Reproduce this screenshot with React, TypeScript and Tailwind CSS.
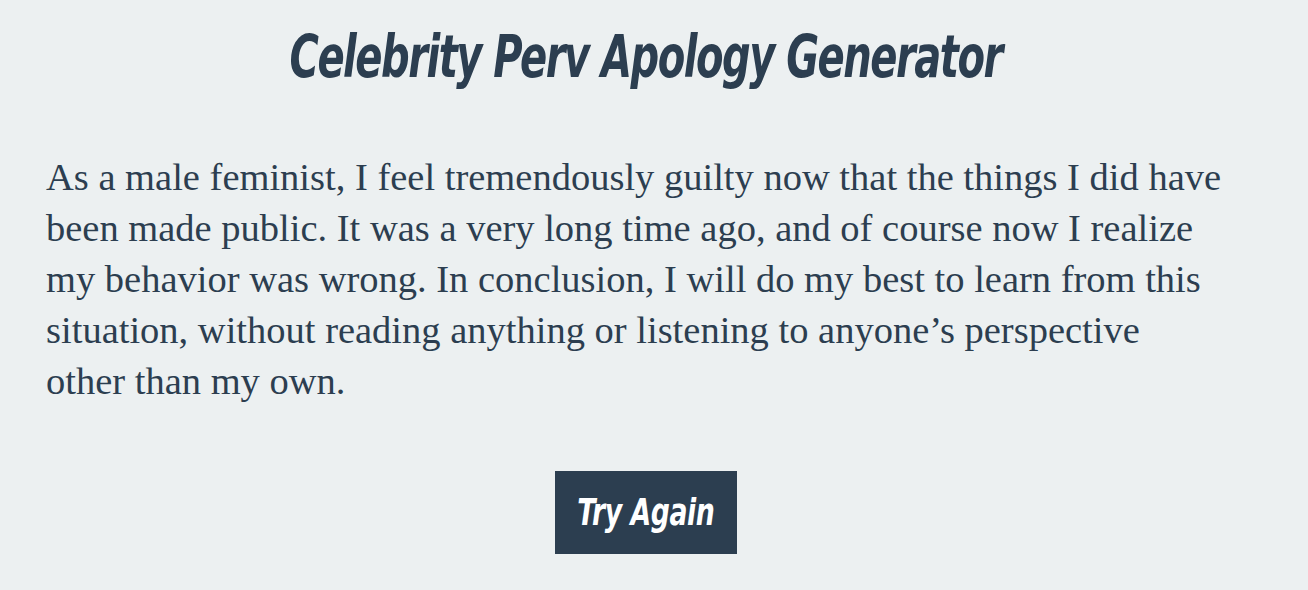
import React from 'react';

const lines = [
  'As a male feminist, I feel tremendously guilty now that the things I did have',
  'been made public. It was a very long time ago, and of course now I realize',
  'my behavior was wrong. In conclusion, I will do my best to learn from this',
  'situation, without reading anything or listening to anyone\u2019s perspective',
  'other than my own.',
];

export default function App() {
  return (
    <div className="min-h-[590px] w-full bg-[#ecf0f1] text-[#2c3e50]">
      <div className="mr-4 flex w-[1292px] flex-col items-center pt-[16px]">
        <h1 className="scale-x-[0.755] whitespace-nowrap font-['DejaVu_Sans_Condensed','Liberation_Sans_Narrow',sans-serif] text-[59px] font-bold italic leading-[82px] tracking-[-2px]">
          Celebrity Perv Apology Generator
        </h1>
        <p className="mt-[54px] w-full whitespace-nowrap px-[46px] font-['Liberation_Serif',serif] text-[38.5px] leading-[51px]">
          {lines.map((l, i) => (
            <React.Fragment key={i}>
              {l}
              {i < lines.length - 1 && <br />}
            </React.Fragment>
          ))}
        </p>
        <button
          type="button"
          className="mt-[64px] flex h-[83px] w-[182px] items-center justify-center bg-[#2c3e50] text-white"
        >
          <span className="scale-x-[0.78] whitespace-nowrap font-['DejaVu_Sans_Condensed','Liberation_Sans_Narrow',sans-serif] text-[38px] font-bold italic tracking-[-0.5px]">
            Try Again
          </span>
        </button>
      </div>
    </div>
  );
}
